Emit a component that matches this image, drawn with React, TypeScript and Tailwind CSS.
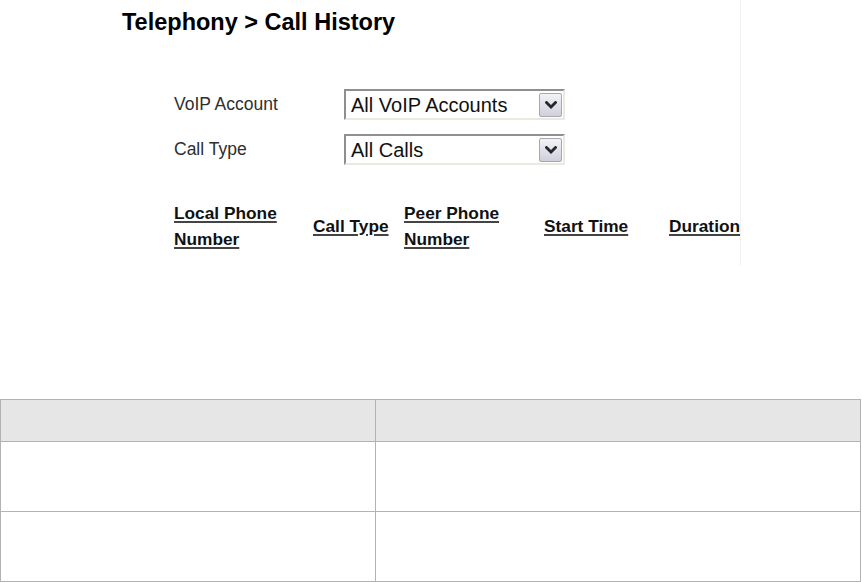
import React from 'react';

const Chevron: React.FC = () => (
    <svg width="12" height="8" viewBox="0 0 12 8" className="block">
        <path d="M1.5 1.5 L6 6 L10.5 1.5" fill="none" stroke="#26262e" strokeWidth="2.8" strokeLinecap="square" />
    </svg>
);

const Select: React.FC<{ value: string }> = ({ value }) => (
    <div className="flex items-center w-[221px] h-[31px] bg-white border-2 border-t-[#8f8f8f] border-l-[#8f8f8f] border-b-[#ece9e0] border-r-[#ece9e0]">
        <span className="flex-1 pl-[5px] text-[20px] leading-[22px] text-[#111]">{value}</span>
        <div className="flex items-center justify-center w-[23px] h-[24px] mr-[1px] rounded-[2px] border border-[#a7a7b0] bg-gradient-to-b from-[#f2f2f7] to-[#cfd0da]">
            <Chevron />
        </div>
    </div>
);

const columns = [
    { label: ['Local Phone', 'Number'], w: 'w-[139px]' },
    { label: ['Call Type'], w: 'w-[91px]' },
    { label: ['Peer Phone', 'Number'], w: 'w-[140px]' },
    { label: ['Start Time'], w: 'w-[125px]' },
    { label: ['Duration'], w: 'w-[80px]' },
];

export default function App() {
    return (
        <div className="w-[862px] h-[582px] bg-white overflow-hidden" style={{ fontFamily: '"Liberation Sans", Arial, sans-serif' }}>
            <div className="w-[741px] h-[266px] border-r border-[#f1f0ea] overflow-hidden">
                <h1 className="pl-[122px] pt-[9px] text-[23.5px] leading-[26px] font-bold text-black">
                    Telephony &gt; Call History
                </h1>

                <div className="mt-[54px] pl-[174px] flex flex-col gap-[14px]">
                    <div className="flex items-center">
                        <span className="w-[170px] text-[17.5px] text-[#2e2e2e]">VoIP Account</span>
                        <Select value="All VoIP Accounts" />
                    </div>
                    <div className="flex items-center">
                        <span className="w-[170px] text-[17.5px] text-[#2e2e2e]">Call Type</span>
                        <Select value="All Calls" />
                    </div>
                </div>

                <div className="mt-[35px] pl-[174px] flex items-center">
                    {columns.map((c, i) => (
                        <div key={i} className={`${c.w} shrink-0 text-[17.3px] leading-[26px] font-bold text-[#111] whitespace-nowrap`}>
                            {c.label.map((l, j) => (
                                <div key={j}>
                                    <a href="#" className="underline decoration-[1.5px] underline-offset-[2px] decoration-[#444]">{l}</a>
                                </div>
                            ))}
                        </div>
                    ))}
                </div>
            </div>

            <div className="mt-[133px] w-[861px] grid grid-cols-[375px_1fr] border-l border-t border-[#b3b3b3]">
                <div className="h-[42px] bg-[#e6e6e6] border-r border-b border-[#b3b3b3]" />
                <div className="h-[42px] bg-[#e6e6e6] border-r border-b border-[#b3b3b3]" />
                <div className="h-[70px] border-r border-b border-[#b3b3b3]" />
                <div className="h-[70px] border-r border-b border-[#b3b3b3]" />
                <div className="h-[70px] border-r border-b border-[#b3b3b3]" />
                <div className="h-[70px] border-r border-b border-[#b3b3b3]" />
            </div>
        </div>
    );
}
